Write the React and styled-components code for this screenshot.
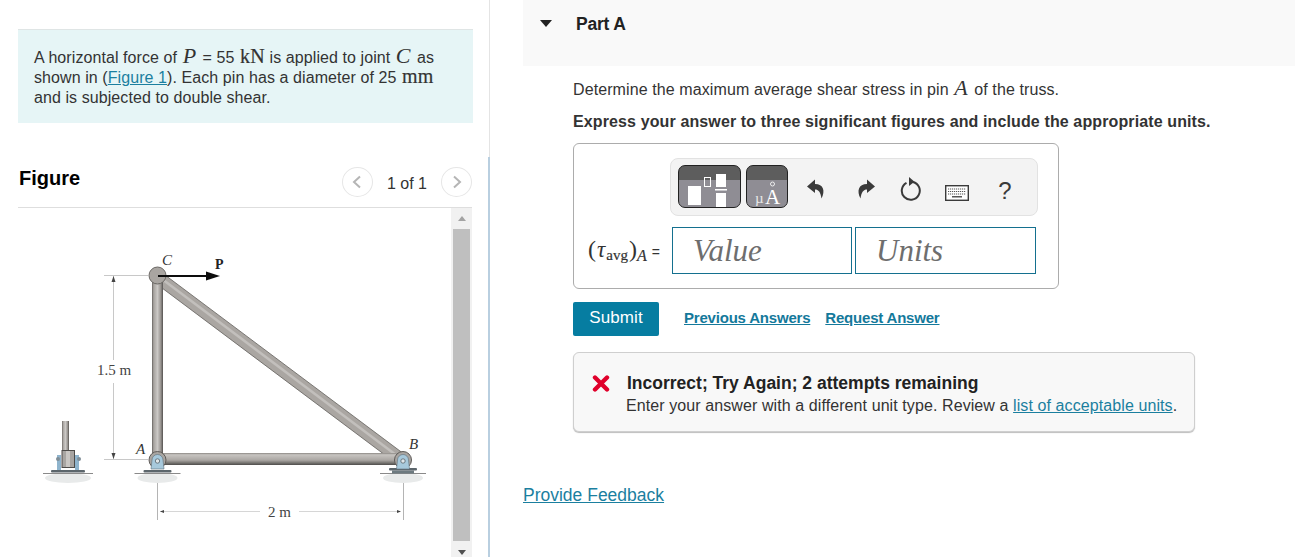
import React from 'react'
import styled, { createGlobalStyle } from 'styled-components'

const GlobalStyle = createGlobalStyle`
  html, body {
    margin: 0;
    height: 557px;
    overflow: hidden;
    background: #fff;
  }
  body {
    font-family: "Liberation Sans", Arial, sans-serif;
    color: #333;
  }
`

const Page = styled.div`
  display: flex;
  height: 557px;
`

const LeftPane = styled.aside`
  width: 488px;
  flex: none;
  padding: 29px 16px 0 18px;
  box-sizing: border-box;
`

const Divider = styled.div`
  width: 2px;
  flex: none;
  background:
    linear-gradient(#e4e4e4, #e4e4e4) right top / 1px 157px no-repeat,
    linear-gradient(#b9cfe0, #b9cfe0) left bottom / 2px 400px no-repeat;
`

const ProblemBox = styled.div`
  height: 94px;
  box-sizing: border-box;
  margin-right: -1px;
  padding: 18px 16px 0 16px;
  background: #e6f5f6;
  border-top: 1px solid #dfe5e5;
  font-size: 16px;
  line-height: 20px;
  letter-spacing: 0.08px;
  white-space: nowrap;
`

const MathVar = styled.i`
  font-family: "Liberation Serif", "Times New Roman", serif;
  font-size: 22px;
  line-height: 0;
  letter-spacing: 0;
  margin: 0 2px 0 1px;
`

const MathUnit = styled.span`
  font-family: "Liberation Serif", "Times New Roman", serif;
  font-size: 20px;
  line-height: 0;
  letter-spacing: 0.3px;
  margin: 0 0 0 1px;
  -webkit-text-stroke: 0.2px #333;
`

const TextLink = styled.a`
  color: #1b7f9f;
  text-decoration: underline;
`

const FigureHeader = styled.div`
  height: 85px;
  box-sizing: border-box;
  display: flex;
  align-items: flex-end;
  justify-content: space-between;
  padding-bottom: 10px;
  border-bottom: 1px solid #dedede;
`

const FigureTitle = styled.h2`
  margin: 0 0 7px 1px;
  font-size: 20px;
  line-height: 24px;
  color: #000;
  font-weight: bold;
`

const Pager = styled.div`
  display: flex;
  align-items: center;
  gap: 14px;
  font-size: 16px;
  color: #333;
`

const PagerLabel = styled.span`
  margin-top: 3px;
`

const PagerButton = styled.span`
  width: 31px;
  height: 30px;
  box-sizing: border-box;
  border: 1px solid #e6e6e6;
  border-radius: 50%;
  display: flex;
  align-items: center;
  justify-content: center;
`

const FigureBody = styled.div`
  display: flex;
  height: 349px;
`

const TrussSvg = styled.svg`
  width: 433px;
  height: 349px;
  flex: none;
  display: block;
`

const Scrollbar = styled.div`
  width: 21px;
  flex: none;
  background: #f1f1f1;
  display: flex;
  flex-direction: column;
  align-items: center;
`

const ScrollArrow = styled.span`
  width: 0;
  height: 0;
  flex: none;
  border-left: 4.5px solid transparent;
  border-right: 4.5px solid transparent;
  ${props => props.up
    ? 'border-bottom: 5px solid #a3a3a3; margin: 8px 0 8px;'
    : 'border-top: 5px solid #505050; margin: 9px 0 0;'}
`

const ScrollThumb = styled.div`
  width: 17px;
  height: 312px;
  background: #bfbfbf;
  flex: none;
`

const RightPane = styled.main`
  flex: 1;
  min-width: 0;
  padding-left: 33px;
`

const PartHeader = styled.header`
  height: 66px;
  box-sizing: border-box;
  background: #f9f9f9;
  padding: 14px 0 0 17px;
  display: flex;
  align-items: flex-start;
  gap: 24px;
`

const Caret = styled.span`
  width: 0;
  height: 0;
  margin-top: 6px;
  border-left: 6.5px solid transparent;
  border-right: 6.5px solid transparent;
  border-top: 7px solid #222;
`

const PartTitle = styled.h3`
  margin: 0;
  font-size: 17.5px;
  line-height: 20px;
  color: #222;
  font-weight: bold;
  letter-spacing: -0.2px;
`

const PartBody = styled.div`
  padding: 14px 0 0 50px;
`

const Prompt = styled.p`
  margin: 0;
  font-size: 16px;
  line-height: 20px;
  letter-spacing: 0.1px;
`

const Instruction = styled.p`
  margin: 12px 0 0;
  font-size: 16px;
  line-height: 20px;
  font-weight: bold;
  letter-spacing: 0.12px;
`

const AnswerBox = styled.div`
  width: 486px;
  height: 146px;
  box-sizing: border-box;
  margin-top: 11px;
  border: 1px solid #acacac;
  border-radius: 6px;
  padding: 14px 20px 0 14px;
`

const ToolbarRow = styled.div`
  display: flex;
  justify-content: flex-end;
`

const Toolbar = styled.div`
  width: 368px;
  height: 58px;
  box-sizing: border-box;
  background: #f3f3f3;
  border: 1px solid #e2e2e2;
  border-radius: 8px;
  padding: 6px 0 0 7px;
  display: flex;
  align-items: flex-start;
`

const PaletteButton = styled.span`
  width: ${props => props.width}px;
  height: 43px;
  box-sizing: border-box;
  margin-right: 5px;
  flex: none;
  border: 1px solid #222;
  border-radius: 7px;
  background: linear-gradient(#5d5d5d 0, #5d5d5d 14px, #8f8d94 14px);

  svg {
    display: block;
    overflow: visible;
  }
`

const ToolIcon = styled.span`
  width: ${props => props.width || 24}px;
  margin-left: ${props => props.left}px;
  margin-top: ${props => props.top || 11}px;
  flex: none;
  display: block;
  color: #3a3a3a;
  font-size: 24px;
  line-height: 26px;
  text-align: center;

  svg {
    display: block;
  }
`

const InputRow = styled.div`
  display: flex;
  align-items: center;
  margin-top: 11px;
`

const InputLabel = styled.div`
  width: 84px;
  height: 30px;
  flex: none;
  display: flex;
  align-items: baseline;
  font-family: "Liberation Serif", serif;
  font-size: 18px;
  color: #333;
  white-space: nowrap;
`

const Paren = styled.span`
  font-size: 24px;
`

const Tau = styled.i`
  font-size: 23px;
  margin: 0 1px 0 1px;
`

const Subscript = styled.span`
  font-size: ${props => props.size}px;
  font-style: ${props => (props.italic ? 'italic' : 'normal')};
  transform: translateY(${props => props.drop}px);
  display: inline-block;
  margin-right: 1px;
  -webkit-text-stroke: 0.2px #333;
`

const LabelEquals = styled.span`
  font-family: "Liberation Sans", sans-serif;
  font-size: 14px;
  margin-left: 4px;
`

const InputBox = styled.div`
  width: ${props => props.width}px;
  height: 47px;
  box-sizing: border-box;
  flex: none;
  margin-right: 3px;
  border: 1px solid #14708f;
  padding-left: 20px;
  font-family: "Liberation Serif", serif;
  font-style: italic;
  font-size: 31px;
  line-height: 46px;
  color: #6e6e6e;
`

const ActionRow = styled.div`
  display: flex;
  align-items: center;
  margin-top: 13px;
`

const SubmitButton = styled.button`
  width: 86px;
  height: 34px;
  padding: 0 0 2px;
  border: 0;
  border-radius: 2px;
  background: #067da1;
  color: #fff;
  font-family: inherit;
  font-size: 17px;
  letter-spacing: 0.1px;
  margin-right: 25px;
`

const ActionLink = styled.a`
  color: #14799b;
  font-size: 15px;
  font-weight: bold;
  text-decoration: underline;
  margin: 0 15px 3px 0;
  letter-spacing: -0.2px;
`

const FeedbackCard = styled.div`
  width: 622px;
  height: 80px;
  box-sizing: border-box;
  margin-top: 16px;
  padding: 20px 0 0 18px;
  background: #f8f8f8;
  border: 1px solid #cfcfcf;
  border-radius: 6px;
  box-shadow: 0 1px 1px #bdbdbd;
`

const FeedbackTitle = styled.div`
  display: flex;
  align-items: center;
  gap: 17px;
  font-size: 17.5px;
  line-height: 20px;
  font-weight: bold;
  color: #222;

  svg {
    flex: none;
  }
`

const FeedbackText = styled.div`
  margin: 3px 0 0 34px;
  font-size: 16px;
  line-height: 20px;
  letter-spacing: 0.09px;
  color: #333;
  white-space: nowrap;
`

const ProvideFeedback = styled.a`
  display: block;
  margin: 52px 0 0 -50px;
  width: max-content;
  color: #1b7f9f;
  font-size: 17.5px;
  line-height: 22px;
  text-decoration: underline;
`

const Chevron = ({ flip }) => (
  <svg width="10" height="14" viewBox="0 0 10 14">
    <path
      d={flip ? 'M2 1.5 8 7 2 12.5' : 'M8 1.5 2 7 8 12.5'}
      fill="none"
      stroke="#b5b5b5"
      strokeWidth="2"
    />
  </svg>
)

const TemplateGlyph = () => (
  <svg width="61" height="41" viewBox="0 0 61 41">
    <rect x="9" y="20" width="13" height="19" fill="#fff" />
    <rect x="25.5" y="11.5" width="6" height="9" fill="none" stroke="#fff" />
    <rect x="37" y="8" width="10" height="13" fill="#fff" />
    <rect x="36" y="23" width="12" height="1.5" fill="#fff" />
    <rect x="37" y="27" width="10" height="14" fill="#fff" />
  </svg>
)

const UnitsGlyph = () => (
  <svg width="40" height="41" viewBox="0 0 40 41">
    <text x="8" y="37" fontFamily="Liberation Serif" fontSize="15" fill="#e8e8e8">µ</text>
    <text x="18" y="38" fontFamily="Liberation Serif" fontSize="21" fill="#fff">A</text>
    <circle cx="25.500" cy="18" r="2" fill="none" stroke="#eee" />
  </svg>
)

const UndoIcon = ({ flip }) => (
  <svg width="20" height="20" viewBox="0 0 20 20" style={flip ? { transform: 'scaleX(-1)' } : undefined}>
    <path d="M9 0.500 1 7.500 9 14V10.500C12.500 10.500 14.500 13 15.500 19.500 19.500 12 17.500 5 9 5Z" fill="#3a3a3a" />
  </svg>
)

const RefreshIcon = () => (
  <svg width="24" height="24" viewBox="0 0 24 24">
    <path d="M7.500 5.800A9 9 0 1 0 14 5" fill="none" stroke="#3a3a3a" strokeWidth="2" />
    <path d="M10 0 15.500 4.800 10 9Z" fill="#3a3a3a" />
  </svg>
)

const KeyboardIcon = () => (
  <svg width="24" height="16" viewBox="0 0 24 16">
    <rect x="0.700" y="0.700" width="22.600" height="14.600" fill="#fff" stroke="#3a3a3a" strokeWidth="1.400" />
    <path
      d="M3 4h18M3 6.500h18M3 9h18"
      stroke="#555"
      strokeWidth="1.200"
      strokeDasharray="1.200 0.800"
    />
    <rect x="7" y="11" width="10" height="1.500" fill="#555" />
  </svg>
)

const CrossIcon = () => (
  <svg width="18" height="17" viewBox="0 0 18 17">
    <path d="M3 2.500 15 14.500M15 2.500 3 14.500" stroke="#e0002b" strokeWidth="4.400" strokeLinecap="round" />
  </svg>
)

const Support = ({ x, roller }) => (
  <g>
    <ellipse cx={x} cy={478} rx={20} ry={5} fill="#e8eaea" />
    <rect x={x - 23} y={473} width={46} height={1} fill="#8a8a8a" />
    {roller && <path d={`M${x - 11} 470.500h22v3h-22z`} fill="#6d7a80" />}
    <rect x={x - 14} y={roller ? 468 : 470} width={28} height={2.500} rx={1} fill="#5c666c" />
    <circle cx={x} cy={460} r={8.500} fill="#a9a5a1" stroke="#5e5b58" />
    <path
      d={`M${x - 6.500} 469 ${x - 5.500} 460A5.500 5.500 0 0 1 ${x + 5.500} 460L${x + 6.500} 469z`}
      fill="#a7c9dc"
      stroke="#5c6d78"
      strokeWidth="0.600"
    />
    <circle cx={x} cy={461} r={2.200} fill="#dfe6ea" stroke="#56626a" strokeWidth="0.800" />
  </g>
)

const TrussFigure = () => (
  <TrussSvg viewBox="18 208 433 349">
    <defs>
      <linearGradient id="memberV" x1="0" x2="1" y1="0" y2="0">
        <stop offset="0" stopColor="#66625f" />
        <stop offset="0.15" stopColor="#a6a29e" />
        <stop offset="0.5" stopColor="#cbc8c5" />
        <stop offset="0.8" stopColor="#989490" />
        <stop offset="1" stopColor="#55524f" />
      </linearGradient>
      <linearGradient id="memberH" x1="0" x2="0" y1="0" y2="1">
        <stop offset="0" stopColor="#8a8682" />
        <stop offset="0.15" stopColor="#c7c4c1" />
        <stop offset="0.6" stopColor="#aaa6a2" />
        <stop offset="1" stopColor="#4e4c4a" />
      </linearGradient>
      <filter id="soft">
        <feGaussianBlur stdDeviation="0.450" />
      </filter>
    </defs>
    <g filter="url(#soft)">
      <g stroke="#c8c8c8" strokeWidth="1">
        <path d="M104 275.500h44M104 459.500h44M113.500 276v84M113.500 383v76" />
        <path d="M157.500 478v42M403.500 478v42" stroke="#b4b4b4" />
        <path d="M160 511.500h100M299 511.500h101" stroke="#d6d6d6" />
      </g>
      <path d="M113.500 276l-2 6h4zM113.500 459l-2-6h4zM160 511.500l4-1.500v3zM401 511.500l-4-1.500v3z" fill="#444" />

      <polygon points="161,272 408,457 401,467 154,282" fill="#aaa6a2" stroke="#625f5c" strokeWidth="0.800" />
      <line x1="158" y1="276" x2="404" y2="461" stroke="#c2bfbc" strokeWidth="2.600" />
      <rect x="152" y="276" width="11" height="184" fill="url(#memberV)" />
      <rect x="160" y="453" width="240" height="12" fill="url(#memberH)" />

      <circle cx="157.500" cy="275.500" r="8.500" fill="#a9a5a1" stroke="#6a6764" />
      <Support x={157.500} />
      <Support x={403} roller />

      <ellipse cx="68" cy="478" rx="23" ry="5" fill="#e8eaea" />
      <rect x="43" y="473" width="50" height="1" fill="#8a8a8a" />
      <rect x="51" y="470" width="34" height="2.500" rx="1" fill="#5c666c" />
      <rect x="57" y="455" width="4" height="15" fill="#8fb4cd" />
      <rect x="75" y="455" width="4" height="15" fill="#8fb4cd" />
      <circle cx="58" cy="459" r="2" fill="#7f8d96" />
      <circle cx="79" cy="459" r="2" fill="#7f8d96" />
      <rect x="62" y="421" width="7" height="31" fill="url(#memberV)" />
      <rect x="62" y="450.500" width="12.500" height="17" fill="#a8a5a2" stroke="#4e4c4a" />
      <rect x="66" y="451" width="4" height="16" fill="#c9c6c3" />

      <path d="M158 276h50" stroke="#111" strokeWidth="1.800" />
      <path d="M220 276 206 271.500v9z" fill="#111" />
    </g>
    <text x="162" y="265" fontFamily="Liberation Serif" fontStyle="italic" fontSize="15" fill="#333">C</text>
    <text x="215" y="269" fontFamily="Liberation Serif" fontWeight="bold" fontSize="14" fill="#222">P</text>
    <text x="136" y="454" fontFamily="Liberation Serif" fontStyle="italic" fontSize="15" fill="#333">A</text>
    <text x="409" y="449" fontFamily="Liberation Serif" fontStyle="italic" fontSize="15" fill="#333">B</text>
    <text x="97" y="375" fontFamily="Liberation Serif" fontSize="15" fill="#444">1.5 m</text>
    <text x="268" y="517" fontFamily="Liberation Serif" fontSize="15" fill="#444">2 m</text>
  </TrussSvg>
)

const App = () => {
  return (
    <Page>
      <GlobalStyle />
      <LeftPane>
        <ProblemBox>
          A horizontal force of <MathVar>P</MathVar> = 55 <MathUnit>kN</MathUnit> is applied to joint <MathVar>C</MathVar> as
          <br />
          shown in (<TextLink>Figure 1</TextLink>). Each pin has a diameter of 25 <MathUnit>mm</MathUnit>
          <br />
          and is subjected to double shear.
        </ProblemBox>
        <FigureHeader>
          <FigureTitle>Figure</FigureTitle>
          <Pager>
            <PagerButton><Chevron /></PagerButton>
            <PagerLabel>1 of 1</PagerLabel>
            <PagerButton><Chevron flip /></PagerButton>
          </Pager>
        </FigureHeader>
        <FigureBody>
          <TrussFigure />
          <Scrollbar>
            <ScrollArrow up />
            <ScrollThumb />
            <ScrollArrow />
          </Scrollbar>
        </FigureBody>
      </LeftPane>
      <Divider />
      <RightPane>
        <PartHeader>
          <Caret />
          <PartTitle>Part A</PartTitle>
        </PartHeader>
        <PartBody>
          <Prompt>
            Determine the maximum average shear stress in pin <MathVar>A</MathVar> of the truss.
          </Prompt>
          <Instruction>Express your answer to three significant figures and include the appropriate units.</Instruction>
          <AnswerBox>
            <ToolbarRow>
              <Toolbar>
                <PaletteButton width={63}><TemplateGlyph /></PaletteButton>
                <PaletteButton width={42}><UnitsGlyph /></PaletteButton>
                <ToolIcon left={13} top={14} width={20}><UndoIcon /></ToolIcon>
                <ToolIcon left={30} top={14} width={20}><UndoIcon flip /></ToolIcon>
                <ToolIcon left={23} top={12}><RefreshIcon /></ToolIcon>
                <ToolIcon left={22} top={20}><KeyboardIcon /></ToolIcon>
                <ToolIcon left={24} top={13} width={24}>?</ToolIcon>
              </Toolbar>
            </ToolbarRow>
            <InputRow>
              <InputLabel>
                <Paren>(</Paren>
                <Tau>τ</Tau>
                <Subscript size={15} drop={3}>avg</Subscript>
                <Paren>)</Paren>
                <Subscript size={16} drop={4} italic>A</Subscript>
                <LabelEquals>=</LabelEquals>
              </InputLabel>
              <InputBox width={180}>Value</InputBox>
              <InputBox width={181}>Units</InputBox>
            </InputRow>
          </AnswerBox>
          <ActionRow>
            <SubmitButton>Submit</SubmitButton>
            <ActionLink>Previous Answers</ActionLink>
            <ActionLink>Request Answer</ActionLink>
          </ActionRow>
          <FeedbackCard>
            <FeedbackTitle>
              <CrossIcon />
              Incorrect; Try Again; 2 attempts remaining
            </FeedbackTitle>
            <FeedbackText>
              Enter your answer with a different unit type. Review a <TextLink>list of acceptable units</TextLink>.
            </FeedbackText>
          </FeedbackCard>
          <ProvideFeedback>Provide Feedback</ProvideFeedback>
        </PartBody>
      </RightPane>
    </Page>
  )
}

export default App
